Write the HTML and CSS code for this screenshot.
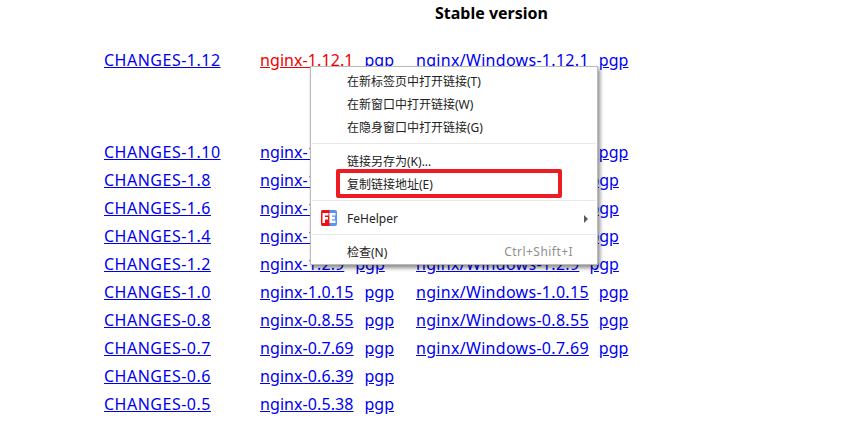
FILE: index.html
```html
<!DOCTYPE html>
<html lang="zh-CN">
<head>
<meta charset="utf-8">
<title>nginx: download</title>
<link rel="stylesheet" href="styles.css">
</head>
<body>
<main class="page">
  <h4 class="title">Stable version</h4>
  <table class="downloads">
    <tr class="first"><td><a href="#">CHANGES-1.12</a></td><td><a class="visited" href="#">nginx-1.12.1</a><a class="sig" href="#">pgp</a></td><td><a href="#">nginx/Windows-1.12.1</a><a class="sig" href="#">pgp</a></td></tr>
    <tr class="spaced"><td><a href="#">CHANGES-1.10</a></td><td><a href="#">nginx-1.10.3</a><a class="sig" href="#">pgp</a></td><td><a href="#">nginx/Windows-1.10.3</a><a class="sig" href="#">pgp</a></td></tr>
    <tr><td><a href="#">CHANGES-1.8</a></td><td><a href="#">nginx-1.8.1</a><a class="sig" href="#">pgp</a></td><td><a href="#">nginx/Windows-1.8.1</a><a class="sig" href="#">pgp</a></td></tr>
    <tr><td><a href="#">CHANGES-1.6</a></td><td><a href="#">nginx-1.6.3</a><a class="sig" href="#">pgp</a></td><td><a href="#">nginx/Windows-1.6.3</a><a class="sig" href="#">pgp</a></td></tr>
    <tr><td><a href="#">CHANGES-1.4</a></td><td><a href="#">nginx-1.4.7</a><a class="sig" href="#">pgp</a></td><td><a href="#">nginx/Windows-1.4.7</a><a class="sig" href="#">pgp</a></td></tr>
    <tr><td><a href="#">CHANGES-1.2</a></td><td><a href="#">nginx-1.2.9</a><a class="sig" href="#">pgp</a></td><td><a href="#">nginx/Windows-1.2.9</a><a class="sig" href="#">pgp</a></td></tr>
    <tr><td><a href="#">CHANGES-1.0</a></td><td><a href="#">nginx-1.0.15</a><a class="sig" href="#">pgp</a></td><td><a href="#">nginx/Windows-1.0.15</a><a class="sig" href="#">pgp</a></td></tr>
    <tr><td><a href="#">CHANGES-0.8</a></td><td><a href="#">nginx-0.8.55</a><a class="sig" href="#">pgp</a></td><td><a href="#">nginx/Windows-0.8.55</a><a class="sig" href="#">pgp</a></td></tr>
    <tr><td><a href="#">CHANGES-0.7</a></td><td><a href="#">nginx-0.7.69</a><a class="sig" href="#">pgp</a></td><td><a href="#">nginx/Windows-0.7.69</a><a class="sig" href="#">pgp</a></td></tr>
    <tr><td><a href="#">CHANGES-0.6</a></td><td><a href="#">nginx-0.6.39</a><a class="sig" href="#">pgp</a></td><td></td></tr>
    <tr><td><a href="#">CHANGES-0.5</a></td><td><a href="#">nginx-0.5.38</a><a class="sig" href="#">pgp</a></td><td></td></tr>
  </table>
</main>

<div class="menu">
  <div class="item">在新标签页中打开链接(T)</div>
  <div class="item">在新窗口中打开链接(W)</div>
  <div class="item">在隐身窗口中打开链接(G)</div>
  <div class="rule"></div>
  <div class="item">链接另存为(K)...</div>
  <div class="item">复制链接地址(E)</div>
  <div class="rule"></div>
  <div class="item ext">
    <svg class="fe" viewBox="0 0 16 16" aria-hidden="true">
      <rect x="0" y="0" width="16" height="16" rx="2" fill="#5a94f2"/>
      <path d="M2 0h6.500v16H2a2 2 0 0 1-2-2V2a2 2 0 0 1 2-2z" fill="#ee1111"/>
      <path d="M1.500 3h6v2.500H4v1.500h3v2.500H4V13H1.500z" fill="#fff"/>
      <path d="M8.500 3h6v2.500H11v1.300h3v2.400h-3v1.300h3.500V13h-6z" fill="#fff"/>
    </svg>
    <span class="label">FeHelper</span>
    <span class="arrow"></span>
  </div>
  <div class="rule"></div>
  <div class="item"><span class="label">检查(N)</span><span class="key">Ctrl+Shift+I</span></div>
</div>
<div class="mark"></div>
</body>
</html>
```
FILE: styles.css
```css
html, body {
  margin: 0;
  padding: 0;
  background: #fff;
}
body {
  width: 850px;
  height: 439px;
  overflow: hidden;
  position: relative;
  font-family: "Noto Sans", "Noto Sans CJK SC", sans-serif;
  font-size: 16px;
  color: #000;
}
.page {
  padding: 0 0 0 104px;
}
.title {
  margin: 0;
  padding: 2px 0 0 331px;
  height: 46px;
  box-sizing: border-box;
  font-size: 16px;
  line-height: 22px;
  font-weight: 700;
}
.downloads {
  border-collapse: collapse;
  border-spacing: 0;
}
.downloads td {
  padding: 0;
  height: 28px;
  line-height: 28px;
  white-space: nowrap;
  vertical-align: middle;
}
.downloads td:nth-child(1),
.downloads td:nth-child(2) {
  width: 156px;
}
.downloads td:nth-child(1) a {
  letter-spacing: 0.5px;
}
.downloads td:nth-child(2) a:first-child {
  letter-spacing: 0.08px;
}
.downloads td:nth-child(3) a:first-child {
  letter-spacing: 0.3px;
}
.downloads .spaced td {
  padding-top: 64px;
}
.downloads a {
  color: #0000ee;
  text-decoration: underline;
}
.downloads a.visited {
  color: #ee0000;
}
.downloads a.sig {
  margin-left: 10px;
}
.downloads td:nth-child(2) a.sig {
  margin-left: 11px;
}
.menu {
  position: absolute;
  left: 310px;
  top: 66px;
  width: 288px;
  height: 199px;
  box-sizing: border-box;
  padding: 3px 0;
  background: #fff;
  border: 1px solid #bababa;
  box-shadow: 2px 3px 4px rgba(0, 0, 0, 0.45);
  font-size: 12px;
  color: #222;
}
.item {
  display: flex;
  align-items: center;
  height: 23px;
  box-sizing: border-box;
  padding: 0 8px 2px 36px;
  position: relative;
  white-space: nowrap;
}
.item.ext {
  padding-bottom: 0;
}
.rule {
  height: 1px;
  margin: 4px 1px 6px 1px;
  background: #e9e9e9;
}
.label {
  flex: 1;
}
.key {
  color: #8f8f8f;
  letter-spacing: 0.45px;
  margin-right: 16px;
}
.fe {
  position: absolute;
  left: 10px;
  top: 3px;
  width: 16px;
  height: 16px;
}
.arrow {
  width: 0;
  height: 0;
  margin-right: 1px;
  border-left: 4px solid #5a5a5a;
  border-top: 4px solid transparent;
  border-bottom: 4px solid transparent;
}
.mark {
  position: absolute;
  left: 336px;
  top: 169px;
  width: 226px;
  height: 29px;
  box-sizing: border-box;
  border: 4px solid #ed1c24;
  border-radius: 2px;
}
```
